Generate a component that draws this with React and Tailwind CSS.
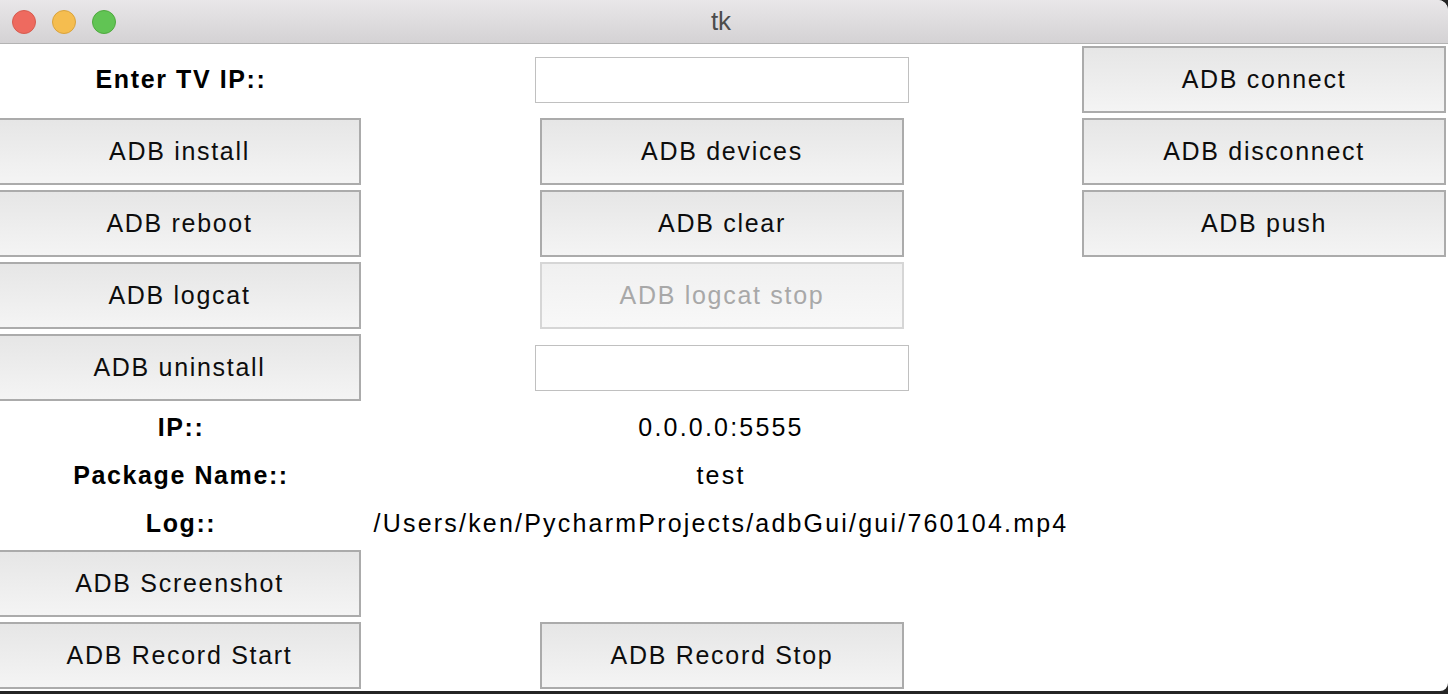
import React from "react";

const font = { fontFamily: '"Liberation Sans", Arial, sans-serif' };

function Btn({ children, disabled, first }) {
  return (
    <div
      className={
        "h-[67px] flex items-center justify-center border-2 text-[25px] tracking-[1.7px] " +
        (first ? "-ml-[2px] w-[363px] " : "w-[364px] ") +
        (disabled
          ? "border-[#d6d6d6] bg-gradient-to-b from-[#f0f0f0] to-[#f8f8f8] text-[#a8a8a8]"
          : "border-[#ababab] bg-gradient-to-b from-[#e6e6e6] to-[#f4f4f4] text-[#0d0d0d]")
      }
    >
      {children}
    </div>
  );
}

function Cell0({ children }) {
  return <div className="flex items-start pt-[2px]">{children}</div>;
}
function Cell1({ children }) {
  return <div className="flex items-start justify-center pt-[2px] pl-[2px]">{children}</div>;
}
function Cell2({ children }) {
  return <div className="flex items-start justify-center pt-[2px]">{children}</div>;
}
function Empty() {
  return <div />;
}
function Entry() {
  return (
    <div className="flex items-center justify-center pl-[2px]">
      <div className="w-[374px] h-[46px] border border-[#c0c0c0] bg-white" />
    </div>
  );
}
function Label({ children }) {
  return (
    <div className="flex items-center justify-center font-bold text-[25px] tracking-[1.6px] text-black">
      {children}
    </div>
  );
}
function Value({ children }) {
  return (
    <div className="flex items-center justify-center text-[25px] tracking-[2.2px] text-black">
      {children}
    </div>
  );
}

export default function App() {
  return (
    <div className="w-[1448px] h-[694px] bg-[#242424] overflow-hidden" style={font}>
      <div className="h-[691px] bg-white rounded-tr-[10px] rounded-br-[8px] overflow-hidden flex flex-col">
        <div className="h-[44px] shrink-0 bg-gradient-to-b from-[#e9e7e9] to-[#d4d2d4] border-b border-[#b3b3b3] relative flex items-center justify-center">
          <div className="absolute left-[12px] top-[10px] flex gap-[16px]">
            <div className="w-[24px] h-[24px] rounded-full bg-[#ee6a5f] border border-[#d65c4f]" />
            <div className="w-[24px] h-[24px] rounded-full bg-[#f5bd4f] border border-[#d9a33d]" />
            <div className="w-[24px] h-[24px] rounded-full bg-[#61c454] border border-[#4fa93f]" />
          </div>
          <span className="text-[26px] text-[#4c4c4c] ml-[-6px]">tk</span>
        </div>
        <div className="grid grid-cols-[362px_718px_368px] grid-rows-[72px_72px_72px_72px_72px_48px_48px_48px_72px_72px]">
          <Label>Enter TV IP::</Label>
          <Entry />
          <Cell2><Btn>ADB connect</Btn></Cell2>

          <Cell0><Btn first>ADB install</Btn></Cell0>
          <Cell1><Btn>ADB devices</Btn></Cell1>
          <Cell2><Btn>ADB disconnect</Btn></Cell2>

          <Cell0><Btn first>ADB reboot</Btn></Cell0>
          <Cell1><Btn>ADB clear</Btn></Cell1>
          <Cell2><Btn>ADB push</Btn></Cell2>

          <Cell0><Btn first>ADB logcat</Btn></Cell0>
          <Cell1><Btn disabled>ADB logcat stop</Btn></Cell1>
          <Empty />

          <Cell0><Btn first>ADB uninstall</Btn></Cell0>
          <Entry />
          <Empty />

          <Label>IP::</Label>
          <Value>0.0.0.0:5555</Value>
          <Empty />

          <Label>Package Name::</Label>
          <Value>test</Value>
          <Empty />

          <Label>Log::</Label>
          <Value>/Users/ken/PycharmProjects/adbGui/gui/760104.mp4</Value>
          <Empty />

          <Cell0><Btn first>ADB Screenshot</Btn></Cell0>
          <Empty />
          <Empty />

          <Cell0><Btn first>ADB Record Start</Btn></Cell0>
          <Cell1><Btn>ADB Record Stop</Btn></Cell1>
          <Empty />
        </div>
      </div>
    </div>
  );
}
